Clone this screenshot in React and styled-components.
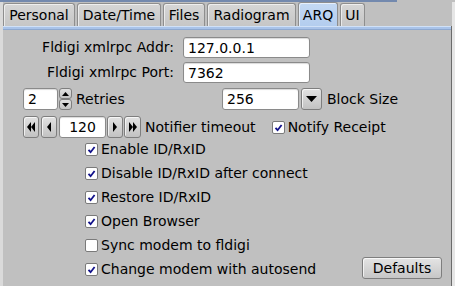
import styled, { createGlobalStyle } from 'styled-components'

const GlobalStyle = createGlobalStyle`
  html, body {
    margin: 0;
    padding: 0;
  }
  body {
    background: #c0c0c0;
    font-family: 'DejaVu Sans', 'Noto Sans', sans-serif;
    font-size: 14px;
    color: #000;
  }
`

const Window = styled.div`
  width: 455px;
  height: 286px;
  display: flex;
  flex-direction: column;
  overflow: hidden;
  background: #c0c0c0;
`

const TopLine = styled.div`
  width: 397px;
  height: 2px;
  background: #7389ae;
`

const Frame = styled.div`
  flex: 1;
  display: flex;
`

const Edge = styled.div`
  width: 3px;
  background: ${(p) => p.$color};
`

const Main = styled.div`
  width: 449px;
  display: flex;
  flex-direction: column;
`

const TabBar = styled.div`
  height: 24px;
  display: flex;
  align-items: flex-end;
  gap: 2px;
`

const Tab = styled.div`
  box-sizing: border-box;
  width: ${(p) => p.$w}px;
  height: ${(p) => (p.$active ? 24 : 23)}px;
  border: 1px solid #8e8e8e;
  border-bottom: none;
  border-radius: 3px 3px 0 0;
  background: ${(p) =>
    p.$active
      ? 'linear-gradient(#c4d9f4, #b3cdee)'
      : 'linear-gradient(#d6d6d6, #c6c6c6)'};
  box-shadow: inset 1px 1px 0 rgba(255, 255, 255, 0.6);
  display: flex;
  align-items: center;
  justify-content: center;
`

const Panel = styled.div`
  flex: 1;
  border-right: 1px solid #6b6b6b;
  display: flex;
  flex-direction: column;
`

const BlueBar = styled.div`
  height: 2px;
  background: #a9c3e9;
  border-top: 1px solid #d0e1f7;
  border-bottom: 1px solid #8ea9d0;
`

const FieldGrid = styled.div`
  display: grid;
  grid-template-columns: 171px 127px;
  column-gap: 9px;
  row-gap: 4px;
  padding-top: 7px;
`

const Label = styled.div`
  text-align: right;
  line-height: 21px;
  white-space: nowrap;
`

const Input = styled.div`
  box-sizing: border-box;
  width: ${(p) => p.$w}px;
  height: ${(p) => p.$h || 21}px;
  background: #fff;
  border: 1px solid #8a8a8a;
  border-radius: 3px;
  box-shadow: inset 0 1px 1px rgba(0, 0, 0, 0.15);
  padding: 0 4px;
  display: flex;
  align-items: center;
  justify-content: ${(p) => (p.$center ? 'center' : 'flex-start')};
  white-space: nowrap;
`

const Row = styled.div`
  display: flex;
  align-items: center;
  height: 22px;
  margin-top: ${(p) => p.$top}px;
  padding-left: 20px;
`

const Group = styled.div`
  display: flex;
  align-items: center;
  width: ${(p) => (p.$w ? `${p.$w}px` : 'auto')};
  gap: ${(p) => p.$gap || 0}px;
`

const Button = styled.div`
  box-sizing: border-box;
  width: ${(p) => p.$w}px;
  height: ${(p) => p.$h || 22}px;
  border: 1px solid #7e7e7e;
  border-radius: 3px;
  background: linear-gradient(#e2e2e2, #c2c2c2);
  box-shadow: inset 1px 1px 0 rgba(255, 255, 255, 0.7);
  display: flex;
  flex-direction: column;
  align-items: center;
  justify-content: center;
`

const SpinButtons = styled.div`
  box-sizing: border-box;
  width: 13px;
  height: 22px;
  margin-left: 1px;
  display: flex;
  flex-direction: column;
`

const SpinHalf = styled.div`
  flex: 1;
  border: 1px solid #7e7e7e;
  border-radius: 3px;
  background: linear-gradient(#e0e0e0, #c4c4c4);
  display: flex;
  align-items: center;
  justify-content: center;
`

const Text = styled.span`
  white-space: nowrap;
  margin-left: ${(p) => p.$ml || 0}px;
`

const CheckList = styled.div`
  display: flex;
  flex-direction: column;
  padding-left: 82px;
  padding-right: 9px;
  margin-top: -1px;
`

const CheckRow = styled.div`
  height: 24px;
  display: flex;
  align-items: center;
  justify-content: space-between;
`

const CheckLabel = styled.label`
  display: flex;
  align-items: center;
  gap: 3px;
  white-space: nowrap;
  margin-left: ${(p) => p.$ml || 0}px;
`

const Box = styled.span`
  box-sizing: border-box;
  width: 13px;
  height: 13px;
  background: #fff;
  border: 1px solid #7a7a7a;
  border-radius: 2px;
  display: flex;
  align-items: center;
  justify-content: center;
`

const DefaultsButton = styled.div`
  box-sizing: border-box;
  width: 80px;
  height: 22px;
  margin-top: -2px;
  border: 1px solid #7e7e7e;
  border-radius: 3px;
  background: linear-gradient(#e4e4e4, #c6c6c6);
  box-shadow: inset 1px 1px 0 rgba(255, 255, 255, 0.7);
  display: flex;
  align-items: center;
  justify-content: center;
`

function Check({ on }) {
  return (
    <Box>
      {on && (
        <svg width="9" height="9" viewBox="0 0 9 9">
          <path d="M1.5 4.8 L3.6 7.2 L7.6 2" fill="none" stroke="#10108a" strokeWidth="1.8" />
        </svg>
      )}
    </Box>
  )
}

function Tri({ dir, w = 5, h = 9, double }) {
  const one = (x) =>
    dir === 'left'
      ? `${x + w},0 ${x + w},${h} ${x},${h / 2}`
      : dir === 'right'
      ? `${x},0 ${x},${h} ${x + w},${h / 2}`
      : dir === 'up'
      ? `0,${h} ${w},${h} ${w / 2},0`
      : `0,0 ${w},0 ${w / 2},${h}`
  const total = double ? w * 2 : w
  return (
    <svg width={total} height={h} viewBox={`0 0 ${total} ${h}`}>
      <polygon points={one(0)} fill="#000" />
      {double && <polygon points={one(w)} fill="#000" />}
    </svg>
  )
}

const tabs = [
  { label: 'Personal', w: 72 },
  { label: 'Date/Time', w: 84 },
  { label: 'Files', w: 42 },
  { label: 'Radiogram', w: 89 },
  { label: 'ARQ', w: 40, active: true },
  { label: 'UI', w: 25 },
]

const checks = [
  { label: 'Enable ID/RxID', on: true },
  { label: 'Disable ID/RxID after connect', on: true },
  { label: 'Restore ID/RxID', on: true },
  { label: 'Open Browser', on: true },
  { label: 'Sync modem to fldigi', on: false },
  { label: 'Change modem with autosend', on: true, defaults: true },
]

export default function App() {
  return (
    <Window>
      <GlobalStyle />
      <TopLine />
      <Frame>
        <Edge $color="#dadada" />
        <Main>
          <TabBar>
            {tabs.map((t) => (
              <Tab key={t.label} $w={t.w} $active={t.active}>
                {t.label}
              </Tab>
            ))}
          </TabBar>
          <Panel>
            <BlueBar />
            <FieldGrid>
              <Label>Fldigi xmlrpc Addr:</Label>
              <Input $w={127}>127.0.0.1</Input>
              <Label>Fldigi xmlrpc Port:</Label>
              <Input $w={127}>7362</Input>
            </FieldGrid>

            <Row $top={5}>
              <Group $w={199}>
                <Input $w={35} $h={22}>2</Input>
                <SpinButtons>
                  <SpinHalf><Tri dir="up" w={7} h={4} /></SpinHalf>
                  <SpinHalf><Tri dir="down" w={7} h={4} /></SpinHalf>
                </SpinButtons>
                <Text $ml={4}>Retries</Text>
              </Group>
              <Group $gap={2}>
                <Input $w={77} $h={22}>256</Input>
                <Button $w={21}><Tri dir="down" w={11} h={6} /></Button>
              </Group>
              <Text $ml={5}>Block Size</Text>
            </Row>

            <Row $top={6}>
              <Group $gap={2}>
                <Button $w={16}><Tri dir="left" w={4} h={10} double /></Button>
                <Button $w={16}><Tri dir="left" w={4} h={10} /></Button>
              </Group>
              <Input $w={47} $h={22} $center style={{ marginLeft: 2, marginRight: 1 }}>120</Input>
              <Group $gap={1}>
                <Button $w={16}><Tri dir="right" w={4} h={10} /></Button>
                <Button $w={17}><Tri dir="right" w={4} h={10} double /></Button>
              </Group>
              <Text $ml={4}>Notifier timeout</Text>
              <CheckLabel $ml={16}>
                <Check on />
                <span>Notify Receipt</span>
              </CheckLabel>
            </Row>

            <CheckList>
              {checks.map((c) => (
                <CheckRow key={c.label}>
                  <CheckLabel>
                    <Check on={c.on} />
                    <span>{c.label}</span>
                  </CheckLabel>
                  {c.defaults && <DefaultsButton>Defaults</DefaultsButton>}
                </CheckRow>
              ))}
            </CheckList>
          </Panel>
        </Main>
        <Edge $color="#e6e6e6" />
      </Frame>
    </Window>
  )
}
